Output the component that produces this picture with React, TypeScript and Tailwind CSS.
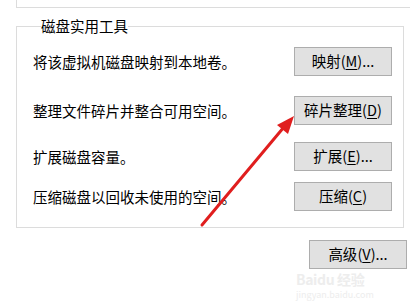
const font = { fontFamily: '"Noto Sans CJK SC", "Microsoft YaHei", sans-serif' }

type Row = { text: string; label: string; key: string; tail?: string; gap: string }

const rows: Row[] = [
  { text: '将该虚拟机磁盘映射到本地卷。', label: '映射', key: 'M', tail: '...', gap: 'mt-0' },
  { text: '整理文件碎片并整合可用空间。', label: '碎片整理', key: 'D', gap: 'mt-[20px]' },
  { text: '扩展磁盘容量。', label: '扩展', key: 'E', tail: '...', gap: 'mt-[17px]' },
  { text: '压缩磁盘以回收未使用的空间。', label: '压缩', key: 'C', gap: 'mt-[11px]' },
]

function WinButton({ label, k, tail }: { label: string; k: string; tail?: string }) {
  return (
    <button className="w-[98px] h-[29px] bg-[#e1e1e1] border border-[#adadad] text-[14.5px] text-black leading-none flex items-center justify-center">
      {label}(<span className="underline underline-offset-2">{k}</span>){tail}
    </button>
  )
}

export default function App() {
  return (
    <div className="relative w-[410px] h-[305px] bg-white overflow-hidden" style={font}>
      {/* bottom edge of the previous group */}
      <div className="ml-[16px] h-[8px] border-l border-b border-[#dcdcdc]" />

      <fieldset className="mt-[8px] ml-[16px] w-[388px] border border-[#dcdcdc] pl-[16px] pr-[11px] pt-[11px] pb-[16px]">
        <legend className="ml-[8px] text-[14.5px] leading-[20px] text-black">磁盘实用工具</legend>
        {rows.map((r) => (
          <div key={r.key} className={`flex items-center justify-between ${r.gap}`}>
            <span className="text-[14.5px] text-black">{r.text}</span>
            <WinButton label={r.label} k={r.key} tail={r.tail} />
          </div>
        ))}
      </fieldset>

      <div className="flex justify-end pr-[3px] mt-[12px]">
        <WinButton label="高级" k="V" tail="..." />
      </div>

      {/* faint watermark */}
      <div className="absolute left-[296px] top-[271px] text-[#ededed] pointer-events-none">
        <div className="text-[14px] leading-[16px] font-bold tracking-tight">Baidu 经验</div>
        <div className="text-[9px] leading-[11px] mt-[2px]">jingyan.baidu.com</div>
      </div>

      {/* red annotation arrow */}
      <svg className="absolute inset-0 pointer-events-none" width="410" height="305">
        <line x1="202" y1="225" x2="284" y2="127" stroke="#e01e1e" strokeWidth="3" strokeLinecap="round" />
        <polygon points="294,116 277,125 288,134" fill="#e01e1e" />
      </svg>
    </div>
  )
}
